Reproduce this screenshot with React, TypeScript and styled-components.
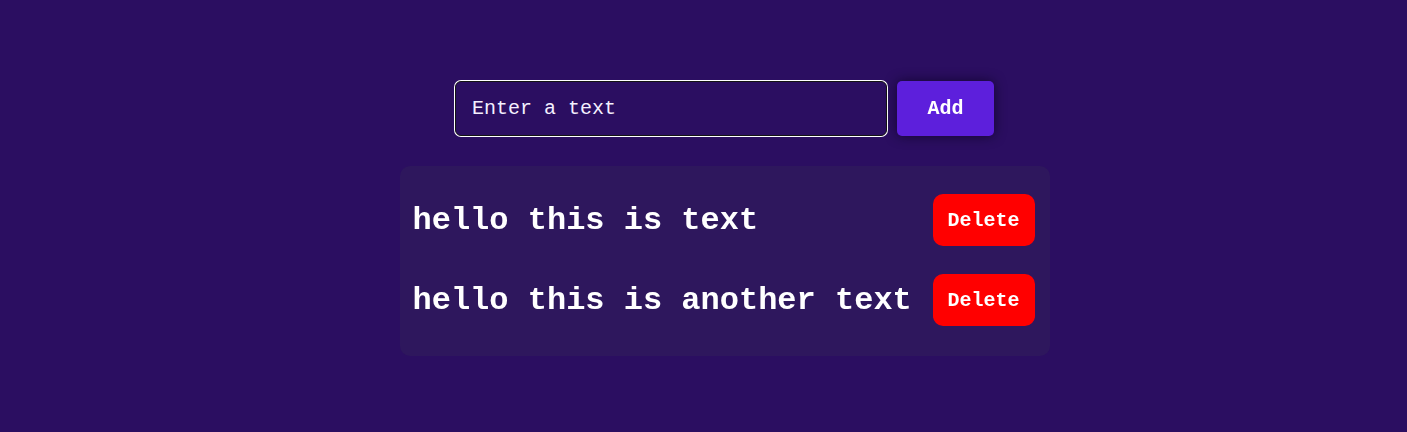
import React, { useState } from "react";
import styled, { createGlobalStyle } from "styled-components";

const GlobalStyle = createGlobalStyle`
  html, body {
    margin: 0;
    padding: 0;
    background: #2b0e61;
    font-family: "Liberation Mono", "Courier New", monospace;
  }
  * { box-sizing: border-box; }
`;

const Page = styled.div`
  min-height: 432px;
  padding: 81px 0 0 42px;
  display: flex;
  flex-direction: column;
  align-items: center;
`;

const Form = styled.form`
  display: flex;
  align-items: center;
  gap: 10px;
  margin: 0;
`;

const TextInput = styled.input`
  width: 432px;
  height: 55px;
  padding: 0 16px;
  border: 1px solid #141414;
  border-radius: 6px;
  box-shadow: 0 0 0 1px #ffffff;
  background: #2b0e61;
  color: #ffffff;
  caret-color: #ffffff;
  font-family: "Courier New", "Liberation Mono", monospace;
  font-size: 20px;
  outline: none;
  &::placeholder {
    color: #f4f0ff;
    opacity: 1;
  }
`;

const AddButton = styled.button`
  height: 55px;
  min-width: 97px;
  padding: 0 30px;
  border: none;
  border-radius: 5px;
  background: #5d1fdc;
  color: #ffffff;
  font-family: "Courier New", "Liberation Mono", monospace;
  font-size: 20px;
  font-weight: bold;
  box-shadow: 0 0 12px rgba(10, 0, 30, 0.7);
  cursor: pointer;
`;

const List = styled.ul`
  list-style: none;
  margin: 30px 0 0 0;
  width: 650px;
  padding: 28px 15px 30px 13px;
  background: #2e175d;
  border-radius: 10px;
  display: flex;
  flex-direction: column;
  gap: 28px;
`;

const Item = styled.li`
  display: flex;
  align-items: center;
  justify-content: space-between;
  gap: 20px;
  margin: 0;
`;

const ItemText = styled.span`
  color: #ffffff;
  font-family: "Courier New", "Liberation Mono", monospace;
  font-size: 32px;
  font-weight: bold;
  white-space: nowrap;
`;

const DeleteButton = styled.button`
  width: 102px;
  height: 52px;
  padding: 0;
  border: none;
  border-radius: 10px;
  background: #ff0000;
  color: #ffffff;
  font-family: "Courier New", "Liberation Mono", monospace;
  font-size: 20px;
  font-weight: bold;
  cursor: pointer;
  flex-shrink: 0;
`;

export default function App() {
  const [items, setItems] = useState<string[]>([
    "hello this is text",
    "hello this is another text",
  ]);
  const [value, setValue] = useState("");

  const add = (e: React.FormEvent) => {
    e.preventDefault();
    if (!value.trim()) return;
    setItems([...items, value.trim()]);
    setValue("");
  };

  return (
    <>
      <GlobalStyle />
      <Page>
        <Form onSubmit={add}>
          <TextInput
            autoFocus
            placeholder="Enter a text"
            value={value}
            onChange={(e) => setValue(e.target.value)}
          />
          <AddButton type="submit">Add</AddButton>
        </Form>
        <List>
          {items.map((t, i) => (
            <Item key={i}>
              <ItemText>{t}</ItemText>
              <DeleteButton onClick={() => setItems(items.filter((_, j) => j !== i))}>
                Delete
              </DeleteButton>
            </Item>
          ))}
        </List>
      </Page>
    </>
  );
}
